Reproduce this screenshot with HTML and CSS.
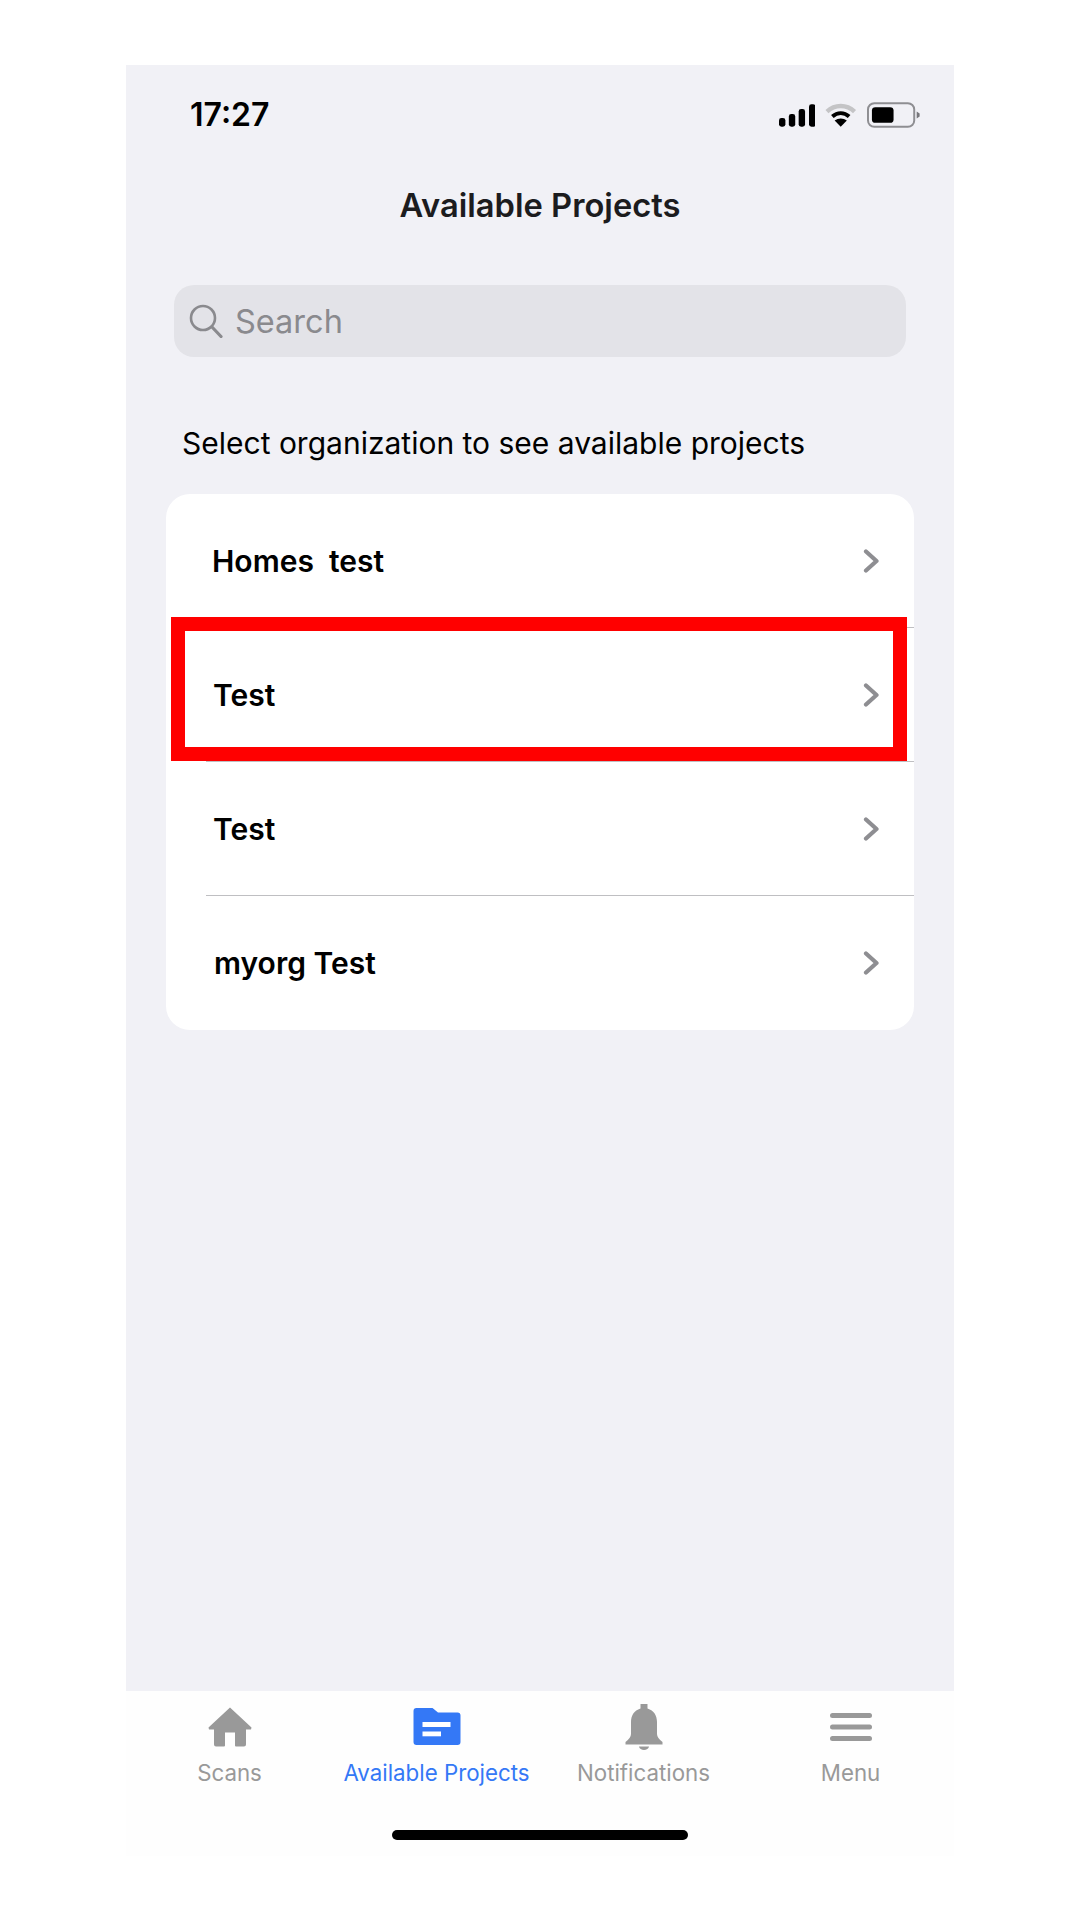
FILE: index.html
```html
<!DOCTYPE html>
<html lang="en">
<head>
<meta charset="utf-8">
<title>Available Projects</title>
<link rel="stylesheet" href="styles.css">
</head>
<body>
<main class="phone">
  <div class="content">
    <header class="status">
      <span class="time">17:27</span>
      <div class="status-icons">
        <svg class="signal" width="37" height="23" viewBox="0 0 37 23"><rect x="0" y="14" width="6.5" height="9" rx="2.5"/><rect x="10" y="10" width="6.5" height="13" rx="2.5"/><rect x="20" y="5" width="6.5" height="18" rx="2.5"/><rect x="30.500" y="0" width="6.500" height="23" rx="2.500"/></svg>
        <svg class="wifi" width="32" height="24" viewBox="0 0 32 24"><path d="M2 8.500C10 1 22 1 30 8.500" fill="none" stroke="#c4c4c6" stroke-width="4.500"/><path d="M7.500 13.500C12.500 9 19.500 9 24.500 13.500" fill="none" stroke="#000" stroke-width="4"/><path d="M16 24 9.800 17.700C13.500 14.700 18.500 14.700 22.200 17.700Z"/></svg>
        <svg class="battery" width="54" height="26" viewBox="0 0 54 26"><rect x="1" y="1" width="47" height="24" rx="6.500" fill="none" stroke="#8e8e92" stroke-width="2"/><rect x="5" y="5" width="22" height="16" rx="3.500"/><path d="M50.500 9.500 53.500 11.500V14.500L50.500 16.500Z" fill="#77777b"/></svg>
      </div>
    </header>
    <h1 class="title">Available Projects</h1>
    <div class="search">
      <svg class="search-icon" width="34" height="34" viewBox="0 0 34 34"><circle cx="14" cy="14" r="12" fill="none" stroke="#8a8a8e" stroke-width="2.600"/><path d="M23 23 32 32.500" fill="none" stroke="#8a8a8e" stroke-width="3.200" stroke-linecap="round"/></svg>
      <span>Search</span>
    </div>
    <p class="hint">Select organization to see available projects</p>
    <section class="list">
      <a class="row"><span class="name name-a">Homes&nbsp; test</span><svg class="chev" width="16" height="24" viewBox="0 0 16 24"><path d="M3 2.500 13.500 12 3 21.500"/></svg></a>
      <a class="row"><span class="name name-b">Test</span><svg class="chev" width="16" height="24" viewBox="0 0 16 24"><path d="M3 2.500 13.500 12 3 21.500"/></svg></a>
      <a class="row"><span class="name name-b">Test</span><svg class="chev" width="16" height="24" viewBox="0 0 16 24"><path d="M3 2.500 13.500 12 3 21.500"/></svg></a>
      <a class="row"><span class="name name-c">myorg Test</span><svg class="chev" width="16" height="24" viewBox="0 0 16 24"><path d="M3 2.500 13.500 12 3 21.500"/></svg></a>
      <div class="highlight"></div>
    </section>
  </div>
  <nav class="tabs">
    <div class="tab-row">
      <a class="tab">
        <svg class="tab-icon" width="44" height="46" viewBox="0 0 44 46"><path d="M22 3.500 43.500 23.500 43 25.500H38V40.500A2 2 0 0 1 36 42.500H28A1 1 0 0 1 27 41.500V28.500H17V41.500A1 1 0 0 1 16 42.500H8A2 2 0 0 1 6 40.500V25.500H1L.5 23.500Z" fill="#999"/></svg>
        <span>Scans</span>
      </a>
      <a class="tab active">
        <svg class="tab-icon" width="48" height="46" viewBox="0 0 48 46"><path d="M3.500 4H19.500L25 8.500H44.500A3 3 0 0 1 47.500 11.500V38A3 3 0 0 1 44.500 41H3.500A3 3 0 0 1 .5 38V7A3 3 0 0 1 3.500 4Z" fill="#3478f6"/><rect x="9.500" y="18" width="28" height="5" fill="#fff"/><rect x="9.500" y="27.500" width="18.500" height="4.800" fill="#fff"/></svg>
        <span>Available Projects</span>
      </a>
      <a class="tab">
        <svg class="tab-icon" width="38" height="46" viewBox="0 0 38 46"><path d="M15.500 0H22.500V4.500C29 6.500 32 11.500 32 18V30C32 33 34 35 37.500 38V40.500H.5V38C4 35 6 33 6 30V18C6 11.500 9 6.500 15.500 4.500Z" fill="#999"/><path d="M14 42.500H24C23.500 47 14.500 47 14 42.500Z" fill="#999"/></svg>
        <span>Notifications</span>
      </a>
      <a class="tab">
        <svg class="tab-icon" width="42" height="46" viewBox="0 0 42 46"><rect y="9" width="42" height="5" rx="2.500" fill="#999"/><rect y="20.500" width="42" height="5" rx="2.500" fill="#999"/><rect y="32" width="42" height="5" rx="2.500" fill="#999"/></svg>
        <span>Menu</span>
      </a>
    </div>
    <div class="home-bar"></div>
  </nav>
</main>
</body>
</html>
```
FILE: styles.css
```css
* { box-sizing: border-box; }
html, body { margin: 0; background: #fff; }
body { font-family: Inter, "Liberation Sans", sans-serif; color: #000; height: 1920px; padding: 65px 126px 64px; }

.phone { height: 1791px; display: flex; flex-direction: column; background: #f1f1f6; }
.content { flex: 1; display: flex; flex-direction: column; padding: 0 40px; }

.status { height: 58px; margin-top: 21px; padding: 0 0 0 24px; display: flex; align-items: center; justify-content: space-between; }
.time { font-size: 32px; font-weight: 600; line-height: 58px; }
.status-icons { display: flex; align-items: center; width: 141px; margin-right: -6px; }
.signal { margin-right: 10px; }
.wifi { margin-right: 10px; }

.title { margin: 36px 0 0; height: 50px; line-height: 50px; text-align: center; font-size: 32.700px; font-weight: 600; color: #1c1c1e; }

.search { margin: 55px 8px 0; height: 72px; border-radius: 20px; background: #e3e3e8; display: flex; align-items: center; padding-left: 15px; gap: 12px; font-size: 32.500px; color: #8a8a8e; }

.hint { margin: 66px 0 0 16px; height: 40px; line-height: 40px; font-size: 30px; }

.list { position: relative; margin-top: 31px; background: #fff; border-radius: 24px; }
.row { height: 134px; margin-left: 40px; display: flex; align-items: center; justify-content: space-between; padding-right: 35px; border-bottom: 1px solid #bfbfc2; }
.row:last-of-type { border-bottom: 0; }
.name { font-size: 30px; font-weight: 600; }
.name-a { margin-left: 6px; }
.name-b { margin-left: 7px; }
.name-c { margin-left: 8px; }
.chev { fill: none; stroke: #8e8e92; stroke-width: 4.200; stroke-linecap: round; stroke-linejoin: round; }

.highlight { position: absolute; left: 5px; top: 123px; width: 736px; height: 144px; border: 14px solid #f00; }

.tabs { height: 165px; flex: none; background: #fefefe; display: flex; flex-direction: column; align-items: center; }
.tab-row { width: 100%; display: grid; grid-template-columns: repeat(4, 1fr); padding-top: 13px; }
.tab { display: flex; flex-direction: column; align-items: center; font-size: 22.300px; line-height: 28px; color: #999; gap: 9px; }
.tab.active { color: #3478f6; }
.tab-icon { display: block; }
.home-bar { width: 296px; height: 10px; margin-top: 43px; border-radius: 5px; background: #000; }
```
